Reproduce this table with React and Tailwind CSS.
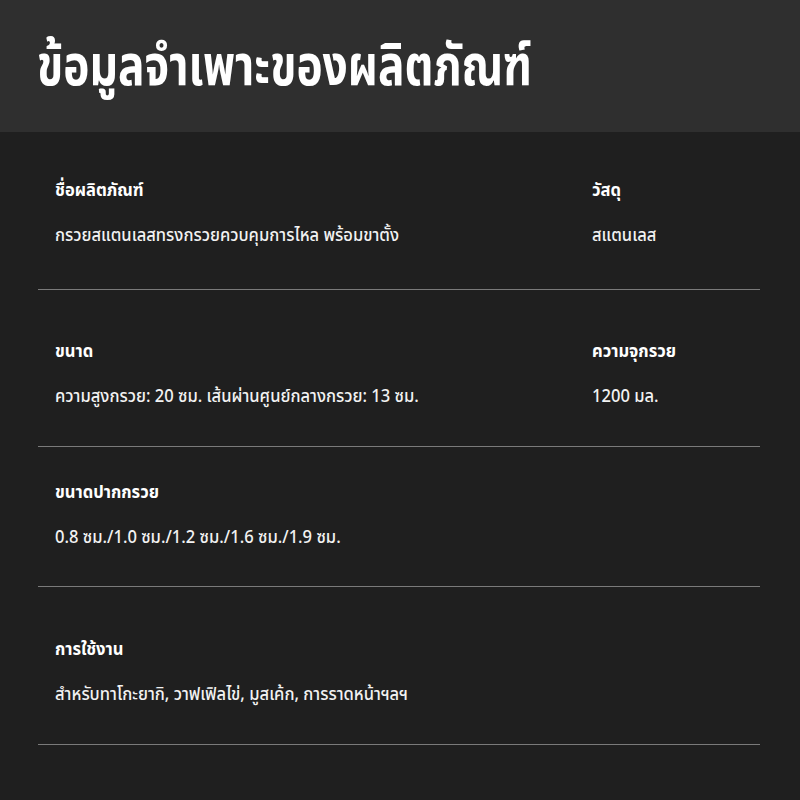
import React from "react";

const rows = [
  { l: ["ชื่อผลิตภัณฑ์", "กรวยสแตนเลสทรงกรวยควบคุมการไหล พร้อมขาตั้ง"], r: ["วัสดุ", "สแตนเลส"], h: "h-[158px]", pt: "pt-[46px]" },
  { l: ["ขนาด", "ความสูงกรวย: 20 ซม. เส้นผ่านศูนย์กลางกรวย: 13 ซม."], r: ["ความจุกรวย", "1200 มล."], h: "h-[157px]", pt: "pt-[49px]" },
  { l: ["ขนาดปากกรวย", "0.8 ซม./1.0 ซม./1.2 ซม./1.6 ซม./1.9 ซม."], r: null, h: "h-[140px]", pt: "pt-[33px]" },
  { l: ["การใช้งาน", "สำหรับทาโกะยากิ, วาฟเฟิลไข่, มูสเค้ก, การราดหน้าฯลฯ"], r: null, h: "h-[158px]", pt: "pt-[50px]" },
];

function Cell({ d }) {
  return (
    <div className="flex flex-col gap-[19px] origin-left scale-x-[0.92]">
      <div className="text-[18px] font-bold leading-[26px] text-white whitespace-nowrap">{d[0]}</div>
      <div className="text-[18px] font-medium leading-[26px] text-[#f2f2f2] whitespace-nowrap">{d[1]}</div>
    </div>
  );
}

export default function App() {
  return (
    <div
      className="w-[800px] h-[800px] bg-[#1f1f1f] overflow-hidden"
      style={{ fontFamily: '"Noto Sans Thai", "Noto Sans", "DejaVu Sans", sans-serif' }}
    >
      <div className="h-[132px] bg-[#2f2f2f] flex items-center pl-[37px]">
        <h1 className="text-[56px] font-bold text-white leading-none whitespace-nowrap origin-left scale-x-[0.79] pt-[4px]">ข้อมูลจำเพาะของผลิตภัณฑ์</h1>
      </div>
      <div className="pl-[38px] pr-[40px]">
        {rows.map((r, i) => (
          <div key={i} className={`${r.h} border-b border-[#7a7a7a] flex justify-between ${r.pt} pl-[17px]`}>
            <Cell d={r.l} />
            {r.r && (
              <div className="w-[168px]">
                <Cell d={r.r} />
              </div>
            )}
          </div>
        ))}
      </div>
    </div>
  );
}
